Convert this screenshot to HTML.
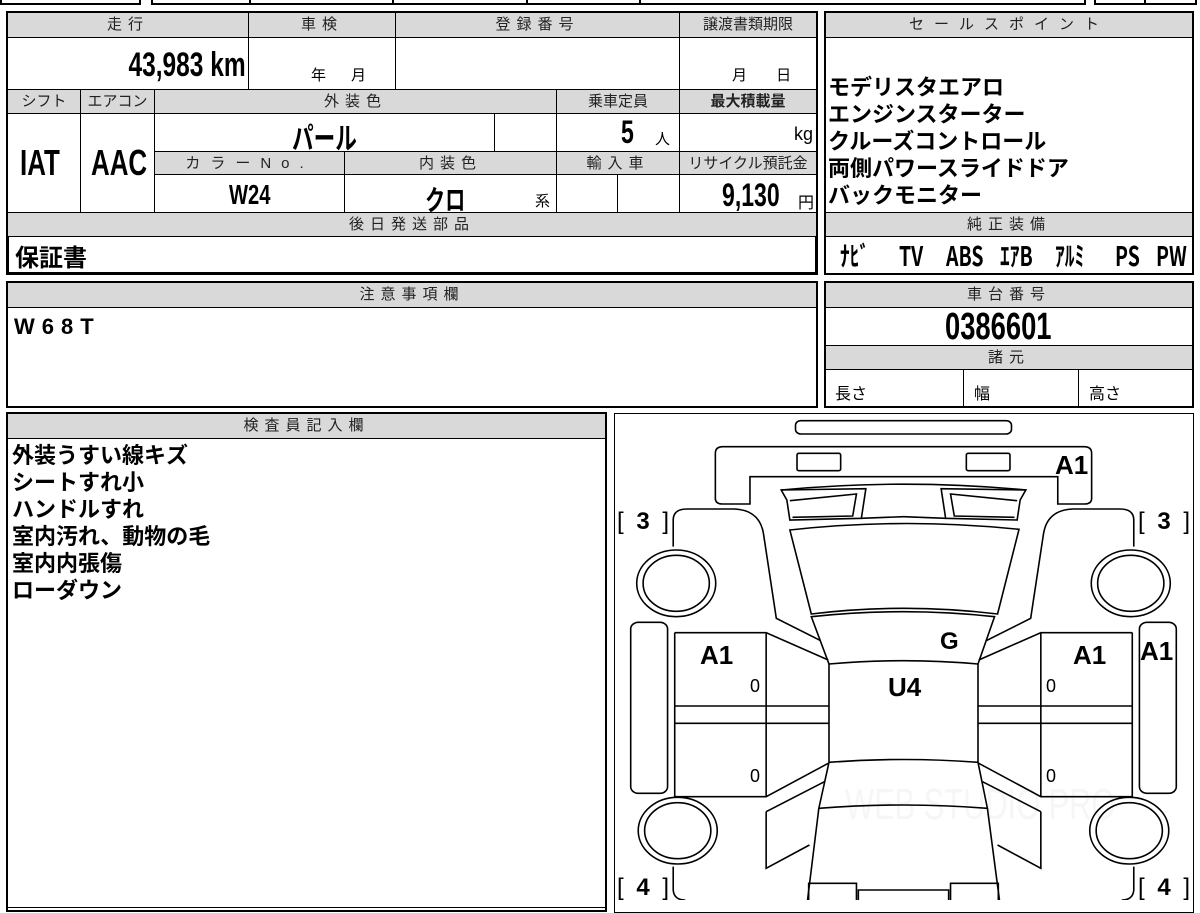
<!DOCTYPE html>
<html><head><meta charset="utf-8"><style>
body{margin:0;width:1200px;height:900px;background:#fff;position:relative;overflow:hidden;font-family:"Liberation Sans","Noto Sans CJK JP",sans-serif;color:#000}
.c{position:absolute;box-sizing:border-box;border:1px solid #000;background:#fff}
.h{background:#d9d9d9;font-size:15px;text-align:center;line-height:23px;letter-spacing:6px;color:#222}
.t{position:absolute;white-space:nowrap}
.b{font-weight:bold}
.n{display:inline-block;transform:scaleX(0.72);transform-origin:left center;font-weight:bold}
.o{position:absolute;box-sizing:border-box;border:2px solid #000}
.eq{position:absolute;top:-4px;font-size:27px;font-family:"Noto Sans CJK JP",sans-serif;line-height:44px;white-space:nowrap}
</style></head><body>
<div class="c" style="left:0;top:-4px;width:141px;height:9px;border-width:2px"></div>
<div class="c" style="left:151px;top:-4px;width:935px;height:9px;border-width:2px"></div>
<div class="c" style="left:249px;top:-4px;width:145px;height:9px;border-width:0 2px;background:transparent"></div>
<div class="c" style="left:526px;top:-4px;width:115px;height:9px;border-width:0 2px;background:transparent"></div>
<div class="c" style="left:1094px;top:-4px;width:103px;height:9px;border-width:2px"></div>
<div class="c" style="left:1144px;top:-4px;width:2px;height:9px"></div>

<div class="c h" style="left:7px;top:12px;width:242px;height:26px">走行</div>
<div class="c h" style="left:248px;top:12px;width:148px;height:26px">車検</div>
<div class="c h" style="left:395px;top:12px;width:285px;height:26px">登録番号</div>
<div class="c h" style="left:679px;top:12px;width:138px;height:26px;letter-spacing:0">譲渡書類期限</div>
<div class="c" style="left:7px;top:37px;width:242px;height:53px"><span class="t" style="right:2px;top:8px;font-size:34px"><span class="n" style="transform-origin:right center">43,983 km</span></span></div>
<div class="c" style="left:248px;top:37px;width:148px;height:53px"><span class="t" style="left:62px;top:26px;font-size:15px">年&nbsp;&nbsp;&nbsp;&nbsp;&nbsp;&nbsp;月</span></div>
<div class="c" style="left:395px;top:37px;width:285px;height:53px"></div>
<div class="c" style="left:679px;top:37px;width:138px;height:53px"><span class="t" style="left:52px;top:26px;font-size:15px">月&nbsp;&nbsp;&nbsp;&nbsp;&nbsp;&nbsp;&nbsp;日</span></div>

<div class="c h" style="left:7px;top:89px;width:74px;height:25px;letter-spacing:0">シフト</div>
<div class="c h" style="left:80px;top:89px;width:75px;height:25px;letter-spacing:0">エアコン</div>
<div class="c h" style="left:154px;top:89px;width:403px;height:25px">外装色</div>
<div class="c h" style="left:556px;top:89px;width:124px;height:25px;letter-spacing:0">乗車定員</div>
<div class="c h" style="left:679px;top:89px;width:138px;height:25px;letter-spacing:0;font-weight:bold">最大積載量</div>

<div class="c" style="left:7px;top:113px;width:74px;height:100px"><span class="t" style="left:12px;top:28px;font-size:36px"><span class="n">IAT</span></span></div>
<div class="c" style="left:80px;top:113px;width:75px;height:100px"><span class="t" style="left:10px;top:28px;font-size:36px"><span class="n">AAC</span></span></div>
<div class="c" style="left:154px;top:113px;width:341px;height:39px"><span class="t" style="left:137px;top:0px;font-size:30px"><span class="n">パール</span></span></div>
<div class="c" style="left:494px;top:113px;width:63px;height:39px"></div>
<div class="c" style="left:556px;top:113px;width:124px;height:39px"><span class="t" style="left:64px;top:0px;font-size:32px"><span class="n">5</span></span><span class="t" style="left:98px;top:14px;font-size:15px">人</span></div>
<div class="c" style="left:679px;top:113px;width:138px;height:39px"><span class="t" style="right:3px;top:10px;font-size:18px">kg</span></div>

<div class="c h" style="left:154px;top:151px;width:191px;height:24px;letter-spacing:10px">カラーNo.</div>
<div class="c h" style="left:344px;top:151px;width:213px;height:24px">内装色</div>
<div class="c h" style="left:556px;top:151px;width:124px;height:24px">輸入車</div>
<div class="c h" style="left:679px;top:151px;width:138px;height:24px;letter-spacing:0">リサイクル預託金</div>

<div class="c" style="left:154px;top:174px;width:191px;height:39px"><span class="t" style="left:74px;top:4px;font-size:28px"><span class="n">W24</span></span></div>
<div class="c" style="left:344px;top:174px;width:213px;height:39px"><span class="t" style="left:80px;top:4px;font-size:28px"><span class="n">クロ</span></span><span class="t" style="left:190px;top:15px;font-size:15px">系</span></div>
<div class="c" style="left:556px;top:174px;width:62px;height:39px"></div>
<div class="c" style="left:617px;top:174px;width:63px;height:39px"></div>
<div class="c" style="left:679px;top:174px;width:138px;height:39px"><span class="t" style="left:42px;top:2px;font-size:32px"><span class="n">9,130</span></span><span class="t" style="right:2px;top:14px;font-size:16px">円</span></div>

<div class="c h" style="left:7px;top:212px;width:810px;height:25px">後日発送部品</div>
<div class="c" style="left:7px;top:236px;width:810px;height:38px;border-width:1px 2px 2px 2px"><span class="t b" style="left:6px;top:1px;font-size:24px">保証書</span></div>
<div class="o" style="left:6px;top:11px;width:812px;height:264px;border-width:2px"></div>

<div class="c h" style="left:825px;top:12px;width:368px;height:26px;letter-spacing:10px">セールスポイント</div>
<div class="c" style="left:825px;top:37px;width:368px;height:176px">
<div class="t b" style="left:2px;top:36px;font-size:22px;line-height:27px">モデリスタエアロ<br>エンジンスターター<br>クルーズコントロール<br>両側パワースライドドア<br>バックモニター</div></div>
<div class="c h" style="left:825px;top:212px;width:368px;height:25px">純正装備</div>
<div class="c" style="left:825px;top:236px;width:368px;height:38px;overflow:hidden">
<span class="eq" style="left:14px"><span class="n">ﾅﾋﾞ</span></span>
<span class="eq" style="left:73px"><span class="n">TV</span></span>
<span class="eq" style="left:120px"><span class="n">ABS</span></span>
<span class="eq" style="left:174px"><span class="n">ｴｱB</span></span>
<span class="eq" style="left:229px"><span class="n">ｱﾙﾐ</span></span>
<span class="eq" style="left:289px"><span class="n">PS</span></span>
<span class="eq" style="left:330px"><span class="n">PW</span></span>
</div>
<div class="o" style="left:824px;top:11px;width:370px;height:264px"></div>

<div class="c h" style="left:7px;top:282px;width:810px;height:26px">注意事項欄</div>
<div class="c" style="left:7px;top:307px;width:810px;height:100px"><span class="t b" style="left:6px;top:6px;font-size:22px;letter-spacing:7px">W68T</span></div>
<div class="o" style="left:6px;top:281px;width:812px;height:127px"></div>

<div class="c h" style="left:825px;top:282px;width:368px;height:26px">車台番号</div>
<div class="c" style="left:825px;top:307px;width:368px;height:39px"><span class="t" style="left:119px;top:-2px;font-size:38px"><span class="n">0386601</span></span></div>
<div class="c h" style="left:825px;top:345px;width:368px;height:25px">諸元</div>
<div class="c" style="left:825px;top:369px;width:139px;height:38px"><span class="t" style="left:9px;top:10px;font-size:16px">長さ</span></div>
<div class="c" style="left:963px;top:369px;width:116px;height:38px"><span class="t" style="left:10px;top:10px;font-size:16px">幅</span></div>
<div class="c" style="left:1078px;top:369px;width:115px;height:38px"><span class="t" style="left:10px;top:10px;font-size:16px">高さ</span></div>
<div class="o" style="left:824px;top:281px;width:370px;height:127px"></div>

<div class="c h" style="left:7px;top:413px;width:599px;height:26px">検査員記入欄</div>
<div class="c" style="left:7px;top:438px;width:599px;height:470px"><div class="t b" style="left:4px;top:3px;font-size:22px;line-height:27px">外装うすい線キズ<br>シートすれ小<br>ハンドルすれ<br>室内汚れ、動物の毛<br>室内内張傷<br>ローダウン</div></div>
<div class="o" style="left:6px;top:412px;width:601px;height:500px"></div>

<div class="o" style="left:614px;top:413px;width:580px;height:500px;border-width:1px"></div>
<div class="t" style="left:845px;top:780px;font-size:44px;color:#f6f6f6;transform:scaleX(0.7);transform-origin:left">WEB STUDIO PRO</div>
<svg style="position:absolute;left:610px;top:410px" width="590" height="490" viewBox="0 0 1568 1470" preserveAspectRatio="none" fill="none" stroke="#000" stroke-width="1.6">
<g>
<rect x="493" y="32" width="574" height="40" rx="14" vector-effect="non-scaling-stroke"/>
<path vector-effect="non-scaling-stroke" d="M280,270 L280,130 Q280,110 300,110 L1260,110 Q1280,110 1280,130 L1280,265 Q1280,282 1260,282 L1190,282 L1190,200 L372,200 L372,282 L300,282 Q280,282 280,265 Z"/>
<rect vector-effect="non-scaling-stroke" x="497" y="130" width="116" height="52" rx="5"/>
<rect vector-effect="non-scaling-stroke" x="947" y="130" width="116" height="52" rx="5"/>
<path vector-effect="non-scaling-stroke" d="M455,240 Q780,205 1107,240"/>
<path vector-effect="non-scaling-stroke" d="M478,360 Q780,322 1087,358 L1030,612 Q780,578 535,612 Z"/>
<path vector-effect="non-scaling-stroke" d="M535,620 Q780,590 1022,620 L978,762 Q780,742 582,762 Z"/>
<path vector-effect="non-scaling-stroke" d="M582,762 L582,1057 Q780,1040 978,1057 L978,762"/>
<path vector-effect="non-scaling-stroke" d="M582,1057 L555,1195 Q780,1175 1003,1195 L978,1057"/>
<path vector-effect="non-scaling-stroke" d="M555,1195 L525,1470 M1003,1195 L1035,1470"/>
<path vector-effect="non-scaling-stroke" d="M528,1470 L528,1420 L655,1420 L655,1470 M1032,1470 L1032,1420 L905,1420 L905,1470 M660,1470 L660,1440 L900,1440 L900,1470"/>
</g>
<g id="half">
<path vector-effect="non-scaling-stroke" d="M455,240 L680,236 L668,325 L478,330 L470,270 Z"/>
<path vector-effect="non-scaling-stroke" d="M478,272 L655,252 L645,318 L485,322"/>
<path vector-effect="non-scaling-stroke" d="M668,325 L780,320"/>
<path vector-effect="non-scaling-stroke" d="M168,410 L168,330 Q168,297 205,297 L330,297 Q398,300 408,372 L442,625 L560,692"/>
<path vector-effect="non-scaling-stroke" d="M172,668 L415,668 L580,750"/>
<path vector-effect="non-scaling-stroke" d="M172,668 L172,1160 L415,1160 L580,1060"/>
<path vector-effect="non-scaling-stroke" d="M415,668 L415,1160"/>
<path vector-effect="non-scaling-stroke" d="M172,888 L582,888 M172,940 L582,940"/>
<path vector-effect="non-scaling-stroke" d="M415,1205 L570,1115 M415,1205 L415,1375 L530,1305"/>
<path vector-effect="non-scaling-stroke" d="M168,1370 L168,1440 Q170,1470 200,1470"/>
<ellipse vector-effect="non-scaling-stroke" cx="176" cy="520" rx="105" ry="100"/>
<ellipse vector-effect="non-scaling-stroke" cx="176" cy="520" rx="88" ry="84"/>
<ellipse vector-effect="non-scaling-stroke" cx="180" cy="1262" rx="105" ry="100"/>
<ellipse vector-effect="non-scaling-stroke" cx="180" cy="1262" rx="88" ry="84"/>
<rect vector-effect="non-scaling-stroke" x="55" y="637" width="98" height="513" rx="20"/>
</g>
<use href="#half" transform="translate(1560,0) scale(-1,1)"/>
</svg>
<div class="t b" style="left:1055px;top:450px;font-size:26px">A1</div>
<div class="t" style="left:617px;top:508px;font-size:24px;word-spacing:6px">[ <b>3</b> ]</div>
<div class="t" style="left:1138px;top:508px;font-size:24px;word-spacing:6px">[ <b>3</b> ]</div>
<div class="t b" style="left:700px;top:640px;font-size:26px">A1</div>
<div class="t b" style="left:1073px;top:640px;font-size:26px">A1</div>
<div class="t b" style="left:1140px;top:636px;font-size:26px">A1</div>
<div class="t b" style="left:940px;top:628px;font-size:24px">G</div>
<div class="t b" style="left:888px;top:672px;font-size:26px">U4</div>
<div class="t" style="left:750px;top:676px;font-size:18px">0</div>
<div class="t" style="left:750px;top:766px;font-size:18px">0</div>
<div class="t" style="left:1046px;top:676px;font-size:18px">0</div>
<div class="t" style="left:1046px;top:766px;font-size:18px">0</div>
<div class="t" style="left:617px;top:874px;font-size:24px;word-spacing:6px">[ <b>4</b> ]</div>
<div class="t" style="left:1138px;top:874px;font-size:24px;word-spacing:6px">[ <b>4</b> ]</div>
</body></html>
